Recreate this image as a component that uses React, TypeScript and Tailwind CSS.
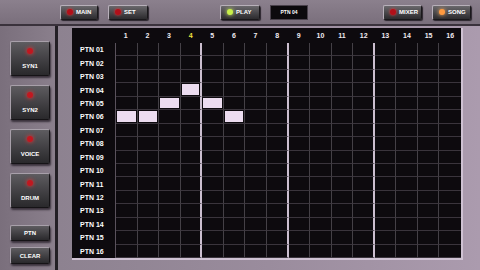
import React from 'react';

const NOTES: Record<number, number[]> = {
  3: [3],
  4: [2, 4],
  5: [0, 1, 5],
};

const TopButton: React.FC<{ label: string; led?: 'red' | 'green' | 'orange'; w: string; ml: string }> = ({ label, led, w, ml }) => {
  const ledClass =
    led === 'green'
      ? 'bg-[#c8f04a] shadow-[0_0_4px_#d8ff60]'
      : led === 'orange'
      ? 'bg-[#ff9a40] shadow-[0_0_4px_#ffb060]'
      : 'bg-[#b0101a] shadow-[0_0_3px_#ff3030]';
  return (
    <div
      className={`${w} ${ml} h-[15px] flex items-center gap-[3px] pl-[6px] rounded-[2px] bg-gradient-to-b from-[#6a686c] to-[#2c2b2e] border-t border-l border-[#b8b0ba] border-r border-b border-r-[#1a181b] border-b-[#1a181b] shadow-[1px_1px_1px_#2a242c]`}
    >
      <span className={`w-[6px] h-[6px] rounded-full ${ledClass}`} />
      <span className="text-[6px] font-bold text-white leading-none">{label}</span>
    </div>
  );
};

const SideButton: React.FC<{ label: string; led?: boolean; h: string; mt: string }> = ({ label, led, h, mt }) => (
  <div
    className={`w-[40px] ${h} ${mt} flex flex-col items-center ${led ? 'justify-between py-[6px]' : 'justify-center'} rounded-[2px] bg-gradient-to-b from-[#5e5c60] to-[#2a292c] border-t border-l border-[#a8a0aa] border-r border-b border-r-[#151316] border-b-[#151316] shadow-[1px_2px_2px_#3a323c]`}
  >
    {led && <span className="w-[6px] h-[6px] rounded-full bg-[#c01820] shadow-[0_0_4px_#ff3030]" />}
    <span className="text-[6px] font-bold text-white leading-none">{label}</span>
  </div>
);

export default function App() {
  const rows = Array.from({ length: 16 }, (_, i) => i);
  const cols = Array.from({ length: 16 }, (_, i) => i);

  return (
    <div className="w-[480px] h-[270px] overflow-hidden flex flex-col bg-[#877c89]" style={{ fontFamily: '"Liberation Sans", Arial, sans-serif' }}>
      {/* Top bar */}
      <div className="h-[26px] shrink-0 flex items-center pl-[60px] bg-gradient-to-b from-[#8b808d] to-[#7a6f7c] border-b-2 border-[#3a323c]">
        <TopButton label="MAIN" w="w-[38px]" ml="" />
        <TopButton label="SET" w="w-[40px]" ml="ml-[10px]" />
        <TopButton label="PLAY" led="green" w="w-[40px]" ml="ml-[72px]" />
        <div className="ml-[10px] w-[38px] h-[15px] bg-[#0c0a0d] border border-[#4a424c] flex items-center justify-center">
          <span className="text-[5px] font-bold text-white leading-none">PTN 04</span>
        </div>
        <TopButton label="MIXER" w="w-[39px]" ml="ml-[75px]" />
        <TopButton label="SONG" led="orange" w="w-[39px]" ml="ml-[10px]" />
      </div>

      {/* Main */}
      <div className="flex-1 flex min-h-0">
        {/* Left panel */}
        <div className="w-[55px] shrink-0 flex flex-col pl-[10px] pt-[15px] bg-gradient-to-r from-[#7a6f7c] to-[#8a7f8c]">
          <SideButton label="SYN1" led h="h-[35px]" mt="" />
          <SideButton label="SYN2" led h="h-[35px]" mt="mt-[9px]" />
          <SideButton label="VOICE" led h="h-[35px]" mt="mt-[9px]" />
          <SideButton label="DRUM" led h="h-[35px]" mt="mt-[9px]" />
          <SideButton label="PTN" h="h-[16px]" mt="mt-[17px]" />
          <SideButton label="CLEAR" h="h-[17px]" mt="mt-[6px]" />
        </div>
        <div className="w-[3px] shrink-0 bg-[#231f25]" />

        {/* Grid area */}
        <div className="flex-1 pl-[14px] pt-[2px] bg-gradient-to-r from-[#8d8290] via-[#9a8c9d] to-[#ab9bae]">
          <div className="w-[391px] h-[232px] bg-[#0d0a0e] border-r-2 border-b-2 border-[#cfc2d3] flex flex-col">
            {/* Header numbers */}
            <div className="h-[15px] flex">
              <div className="w-[43px] shrink-0" />
              <div className="grid grid-cols-16 w-[347px]">
                {cols.map((c) => (
                  <div
                    key={c}
                    className={`flex items-center justify-center text-[7px] font-bold leading-none ${c === 3 ? 'text-[#f0e040]' : 'text-[#f0eaf2]'}`}
                  >
                    {c + 1}
                  </div>
                ))}
              </div>
            </div>

            <div className="flex">
              {/* Labels */}
              <div className="w-[43px] shrink-0 grid grid-rows-16 h-[215px] pl-[8px]">
                {rows.map((r) => (
                  <div key={r} className="flex items-center text-[7px] font-bold text-white leading-none">
                    PTN {String(r + 1).padStart(2, '0')}
                  </div>
                ))}
              </div>

              {/* Cells */}
              <div className="grid grid-cols-16 grid-rows-16 w-[347px] h-[215px] border-l border-[#5a525c]">
                {rows.map((r) =>
                  cols.map((c) => {
                    const on = (NOTES[r] || []).includes(c);
                    const groupEnd = c === 3 || c === 7 || c === 11;
                    return (
                      <div
                        key={`${r}-${c}`}
                        className={`border-b border-[#3a343c] ${groupEnd ? 'border-r-2 border-r-[#cbbecf]' : c === 15 ? '' : 'border-r border-r-[#444046]'} flex`}
                      >
                        {on && <div className="flex-1 m-px bg-[#ecdcf0]" />}
                      </div>
                    );
                  })
                )}
              </div>
            </div>
          </div>
        </div>
      </div>
    </div>
  );
}
